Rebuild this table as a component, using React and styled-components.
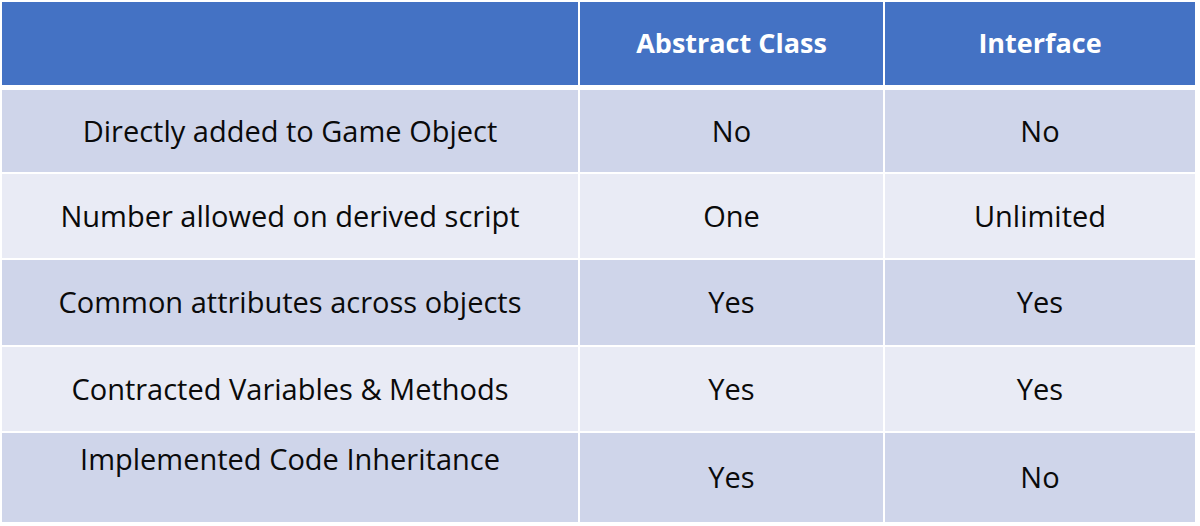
import React from "react";
import styled, { createGlobalStyle } from "styled-components";

const GlobalStyle = createGlobalStyle`
  html, body {
    margin: 0;
    padding: 0;
    background: #ffffff;
  }
  body {
    font-family: "Open Sans", "Noto Sans", "Liberation Sans", sans-serif;
  }
`;

const Page = styled.div`
  width: 1200px;
  height: 526px;
  padding: 2px 0 0 2px;
  box-sizing: border-box;
  background: #ffffff;
`;

const Table = styled.div`
  width: 1193px;
  display: flex;
  flex-direction: column;
  gap: 2px;
`;

const Row = styled.div`
  display: grid;
  grid-template-columns: 576px 303px 310px;
  column-gap: 2px;
  height: ${(p) => p.$h}px;
  margin-bottom: ${(p) => (p.$header ? 3 : 0)}px;
`;

const Cell = styled.div`
  display: flex;
  align-items: ${(p) => (p.$top ? "flex-start" : "center")};
  justify-content: center;
  padding-top: ${(p) => (p.$top ? 9 : 0)}px;
  box-sizing: border-box;
  background: ${(p) =>
    p.$header ? "#4472c4" : p.$odd ? "#cfd5ea" : "#e9ebf5"};
  color: ${(p) => (p.$header ? "#ffffff" : "#0a0a0a")};
  font-size: ${(p) => (p.$header ? 27 : 29)}px;
  font-weight: ${(p) => (p.$header ? 700 : 400)};
  line-height: 1.2;
  white-space: nowrap;
`;

const rows = [
  { label: "Directly added to Game Object", a: "No", b: "No", h: 82 },
  { label: "Number allowed on derived script", a: "One", b: "Unlimited", h: 84 },
  { label: "Common attributes across objects", a: "Yes", b: "Yes", h: 85 },
  { label: "Contracted Variables & Methods", a: "Yes", b: "Yes", h: 84 },
  { label: "Implemented Code Inheritance", a: "Yes", b: "No", h: 89, top: true },
];

export default function App() {
  return (
    <>
      <GlobalStyle />
      <Page>
        <Table>
          <Row $h={83} $header>
            <Cell $header />
            <Cell $header>Abstract Class</Cell>
            <Cell $header>Interface</Cell>
          </Row>
          {rows.map((r, i) => (
            <Row key={r.label} $h={r.h}>
              <Cell $odd={i % 2 === 0} $top={r.top}>
                {r.label}
              </Cell>
              <Cell $odd={i % 2 === 0}>{r.a}</Cell>
              <Cell $odd={i % 2 === 0}>{r.b}</Cell>
            </Row>
          ))}
        </Table>
      </Page>
    </>
  );
}
